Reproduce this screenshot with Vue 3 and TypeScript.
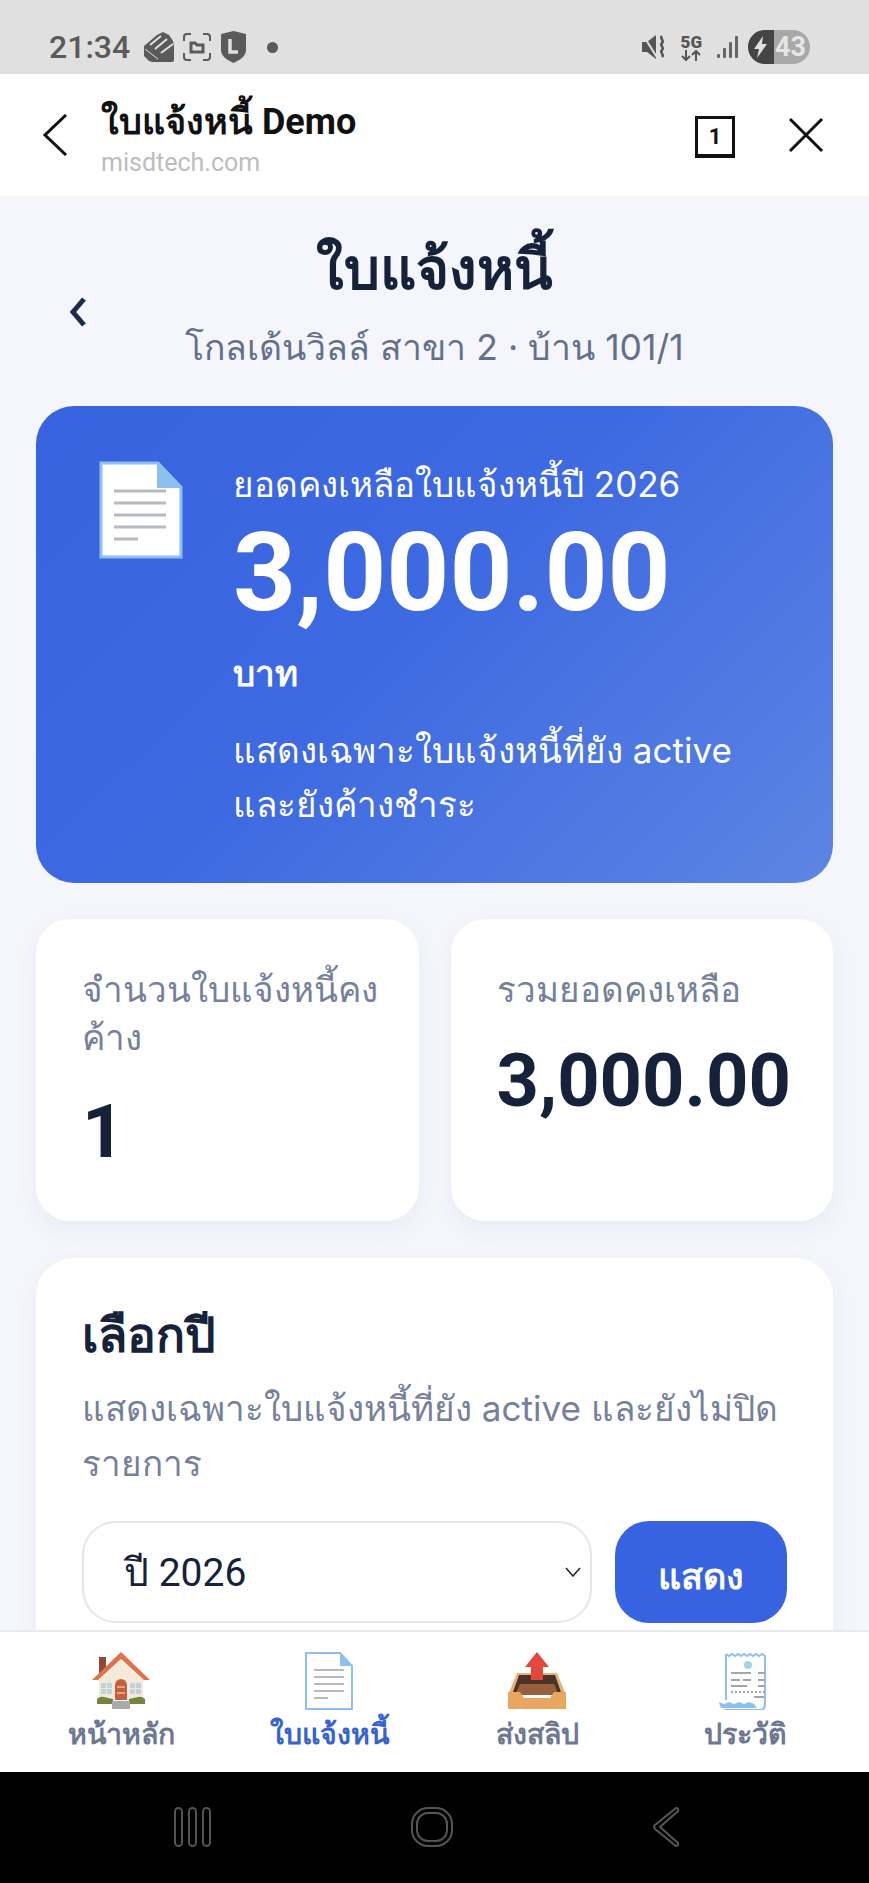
<script setup lang="ts">
interface NavItem {
  label: string
  icon: string
  active?: boolean
}

const navItems: NavItem[] = [
  { label: 'หน้าหลัก', icon: 'home' },
  { label: 'ใบแจ้งหนี้', icon: 'doc', active: true },
  { label: 'ส่งสลิป', icon: 'tray' },
  { label: 'ประวัติ', icon: 'receipt' }
]
</script>

<template>
  <div class="phone">
    <div class="status">
      <div class="status-left">
        <span class="time">21:34</span>
        <svg class="ic-hand" width="30" height="30" viewBox="0 0 30 30">
          <path d="M0 14 13 3l6-3 6 3 4 6 1 5v14a2 2 0 0 1-2 2H8l-3-1-5-5z" fill="#5a5a5a"/>
          <path d="M6 13 17 4M11 17 23 7M17 21 29 12" stroke="#e0e0e0" stroke-width="2" fill="none"/>
          <path d="M1 17 14 27" stroke="#e0e0e0" stroke-width="1" fill="none"/>
        </svg>
        <svg width="28" height="28" viewBox="0 0 28 28" fill="none" stroke="#5a5a5a" stroke-width="2">
          <path d="M1 8V4a3 3 0 0 1 3-3h4M20 1h4a3 3 0 0 1 3 3v4M27 20v4a3 3 0 0 1-3 3h-4M8 27H4a3 3 0 0 1-3-3v-4"/>
          <path d="M8 10h4l2 2h6v7H8z" stroke-width="3"/>
        </svg>
        <svg width="27" height="32" viewBox="0 0 27 32">
          <path d="M1 3 13.500 0 26 3v16c0 6-6 10-12.500 13C7 29 1 25 1 19z" fill="#5a5a5a"/>
          <path d="M10 8v13h8" fill="none" stroke="#e0e0e0" stroke-width="3.500"/>
        </svg>
        <span class="dot"></span>
      </div>
      <div class="status-right">
        <svg width="24" height="26" viewBox="0 0 24 26">
          <path d="M0 8h5l9-7v24l-9-7H0z" fill="#555"/>
          <path d="M1 1l15 24" stroke="#e0e0e0" stroke-width="2"/>
          <path d="M20 2c-3 3 3 4 0 7s3 4 0 7 3 4 0 7" fill="none" stroke="#555" stroke-width="2.500"/>
        </svg>
        <div class="net">
          <b>5G</b>
          <svg width="20" height="11" viewBox="0 0 20 11" fill="none" stroke="#555" stroke-width="2"><path d="M5 0v9M1 6l4 4 4-4M15 11V2M11 5l4-4 4 4"/></svg>
        </div>
        <svg width="22" height="24" viewBox="0 0 22 24" fill="#666">
          <rect x="0" y="19" width="3" height="4" rx="1"/>
          <rect x="6" y="13" width="3" height="10" rx="1"/>
          <rect x="12" y="7" width="3" height="16" rx="1"/>
          <rect x="18" y="1" width="3" height="22" rx="1"/>
        </svg>
        <div class="battery">
          <span class="bolt"><svg width="14" height="22" viewBox="0 0 14 22"><path d="M9 0 0 13h5l-2 9 10-14H8z" fill="#e0e0e0"/></svg></span>
          <span class="level">43</span>
        </div>
      </div>
    </div>

    <div class="topbar">
      <svg class="top-back" width="26" height="42" viewBox="0 0 26 42" fill="none" stroke="#111" stroke-width="3"><path d="M24 1 3 21l21 20"/></svg>
      <div class="top-title">
        <div class="top-name">ใบแจ้งหนี้ Demo</div>
        <div class="top-url">misdtech.com</div>
      </div>
      <div class="tab-count">1</div>
      <svg width="36" height="36" viewBox="0 0 36 36" fill="none" stroke="#111" stroke-width="3"><path d="M2 2l32 32M34 2 2 34"/></svg>
    </div>

    <div class="content">
      <div class="page-head">
        <svg class="page-back" width="18" height="30" viewBox="0 0 18 30" fill="none" stroke="#1e2a4f" stroke-width="5"><path d="M15 2 4 15l11 13"/></svg>
        <h1>ใบแจ้งหนี้</h1>
        <p>โกลเด้นวิลล์ สาขา 2 · บ้าน 101/1</p>
      </div>

      <section class="hero">
        <svg class="hero-icon" width="84" height="98" viewBox="0 0 84 98">
          <path d="M2 2h57l23 24v70H2z" fill="#fff" stroke="#8ec0ee" stroke-width="3"/>
          <path d="M58 1v26h25z" fill="#8ec0ee"/>
          <path d="M15 30h52M15 42h52M15 54h52M15 66h52M15 78h24" stroke="#b5bac0" stroke-width="3"/>
        </svg>
        <div class="hero-body">
          <div class="hero-label">ยอดคงเหลือใบแจ้งหนี้ปี 2026</div>
          <div class="hero-amount">3,000.00</div>
          <div class="hero-unit">บาท</div>
          <div class="hero-note">แสดงเฉพาะใบแจ้งหนี้ที่ยัง active และยังค้างชำระ</div>
        </div>
      </section>

      <div class="stats">
        <div class="stat">
          <div class="stat-label">จำนวนใบแจ้งหนี้คง<wbr>ค้าง</div>
          <div class="stat-value low">1</div>
        </div>
        <div class="stat">
          <div class="stat-label">รวมยอดคงเหลือ</div>
          <div class="stat-value">3,000.00</div>
        </div>
      </div>

      <section class="year-card">
        <h2>เลือกปี</h2>
        <p>แสดงเฉพาะใบแจ้งหนี้ที่ยัง active และยังไม่ปิดรายการ</p>
        <div class="year-row">
          <div class="select">
            <span>ปี 2026</span>
            <svg width="16" height="10" viewBox="0 0 16 10" fill="none" stroke="#222" stroke-width="1.500"><path d="M1 1l7 8 7-8"/></svg>
          </div>
          <button class="show-btn">แสดง</button>
        </div>
      </section>
    </div>

    <nav class="bottom-nav">
      <div v-for="item in navItems" :key="item.label" class="nav-item" :class="{ active: item.active }">
        <svg v-if="item.icon === 'home'" width="58" height="58" viewBox="0 0 58 58">
          <rect x="7" y="5" width="7" height="16" fill="#8e4a32"/>
          <path d="M7 28 29 8l22 20v20H7z" fill="#f3ead9"/>
          <path d="M0 28 29 0l29 28h-6L29 7 6 28z" fill="#e0714a"/>
          <path d="M9 31h11v11H9zM38 31h11v11H38z" fill="#bcd4dc"/>
          <path d="M14.500 31v11M9 36.500h11M43.500 31v11M38 36.500h11" stroke="#f3ead9" stroke-width="1"/>
          <path d="M23 48V33a6 6 0 0 1 12 0v15z" fill="#c4603f"/>
          <path d="M25 35h8M25 41h8" stroke="#e7a27f" stroke-width="2"/>
          <path d="M5 52v-5q3-3 7-2t9 2v5zM53 52v-5q-3-3-7-2t-9 2v5z" fill="#74843f"/>
          <path d="M20 49h18v8H20z" fill="#a9a9a9"/>
        </svg>
        <svg v-else-if="item.icon === 'doc'" width="48" height="58" viewBox="0 0 48 58">
          <path d="M1 1h34l12 13v43H1z" fill="#fff" stroke="#8ec0ee" stroke-width="2"/>
          <path d="M35 1v13h12z" fill="#8ec0ee"/>
          <path d="M9 18h30M9 25h30M9 32h30M9 39h30M9 46h14" stroke="#b5bac0" stroke-width="2"/>
        </svg>
        <svg v-else-if="item.icon === 'tray'" width="58" height="58" viewBox="0 0 58 58">
          <path d="M9 21h40l9 22H0z" fill="#e8b07a"/>
          <path d="M11 23h36l7 20H4z" fill="#4b3327"/>
          <path d="M12 32h34l5 11H7z" fill="#96603f"/>
          <path d="M0 40h12l4 6h26l4-6h12v17H0z" fill="#e8a660"/>
          <path d="M23 28V15h-6L29 0l12 15h-6v13z" fill="#e2493a"/>
        </svg>
        <svg v-else width="52" height="58" viewBox="0 0 52 58" fill="none">
          <path d="M7 2l3 2 3-2 3 2 3-2 3 2 3-2 3 2 3-2 3 2 3-2 3 2 3-2 3 2v48q0 6-5 6H5" stroke="#8ec0ee" stroke-width="2"/>
          <path d="M7 2v46" stroke="#8ec0ee" stroke-width="2"/>
          <path d="M0 50l5 2 5-2 5 2 5-2 5 2 5-2 5 2 3 4H3q-3-1-3-8z" fill="#8ec0ee"/>
          <circle cx="29" cy="13" r="4" fill="#a5d4e0"/>
          <path d="M12 21h20M39 21h7M12 28h9M24 28h8M39 28h7M12 34h16M39 34h7M35 45h10" stroke="#a0a6ac" stroke-width="2"/>
          <path d="M12 40h34" stroke="#a0a6ac" stroke-width="2" stroke-dasharray="2 2"/>
        </svg>
        <span>{{ item.label }}</span>
      </div>
    </nav>

    <div class="android-nav">
      <svg width="38" height="40" viewBox="0 0 38 40" fill="none" stroke="#555" stroke-width="2"><rect x="1" y="1" width="7" height="38" rx="3.500"/><rect x="15" y="1" width="7" height="38" rx="3.500"/><rect x="29" y="1" width="7" height="38" rx="3.500"/></svg>
      <svg width="42" height="40" viewBox="0 0 42 40" fill="none" stroke="#555" stroke-width="2"><rect x="1" y="1" width="40" height="38" rx="16"/><rect x="6" y="6" width="30" height="28" rx="11"/></svg>
      <svg width="28" height="42" viewBox="0 0 28 42" fill="none" stroke="#555" stroke-width="2"><path d="M24 2a2 2 0 0 1 2 3L8 21l18 16a2 2 0 0 1-2 3L3 23a3 3 0 0 1 0-4z"/></svg>
    </div>
  </div>
</template>

<style scoped>
.phone {
  width: 869px;
  height: 1883px;
  display: flex;
  flex-direction: column;
  overflow: hidden;
  background: #f4f6fb;
  font-family: Inter, "Noto Sans", sans-serif;
  color: #16213a;
}

.status {
  height: 74px;
  flex: none;
  background: #e0e0e0;
  display: flex;
  justify-content: space-between;
  align-items: center;
  padding: 20px 59px 0 49px;
  box-sizing: border-box;
}

.status-left {
  display: flex;
  align-items: center;
  gap: 9px;
}

.time {
  font: 500 32px Roboto, sans-serif;
  color: #5a5a5a;
  margin-right: 5px;
}

.dot {
  width: 11px;
  height: 11px;
  border-radius: 50%;
  background: #5a5a5a;
  margin-left: 11px;
}

.status-right {
  display: flex;
  align-items: center;
  gap: 15px;
}

.net {
  display: flex;
  flex-direction: column;
  align-items: center;
  font: 700 17px/16px Roboto, sans-serif;
  color: #555;
}

.battery {
  width: 62px;
  height: 34px;
  border-radius: 17px;
  overflow: hidden;
  display: flex;
  background: #a8a8a8;
  margin-left: -6px;
}

.bolt {
  width: 26px;
  background: #444;
  display: flex;
  align-items: center;
  justify-content: center;
}

.level {
  font: 700 27px/34px Roboto, sans-serif;
  color: #e6e6e6;
  padding-left: 1px;
}

.topbar {
  height: 122px;
  flex: none;
  box-sizing: border-box;
  background: #fff;
  display: flex;
  align-items: center;
  padding: 0 45px 0 42px;
}

.top-back {
  margin-right: 33px;
}

.top-title {
  flex: 1;
  padding-top: 8px;
}

.top-name {
  font: 700 36px/46px Roboto, "Noto Sans", sans-serif;
  color: #111;
}

.top-url {
  font: 400 25px/35px Roboto, sans-serif;
  color: #bdbdbd;
}

.tab-count {
  width: 34px;
  height: 35px;
  border: 3px solid #111;
  border-bottom-width: 4px;
  font: 700 22px/35px Roboto, sans-serif;
  text-align: center;
  color: #111;
  margin-right: 53px;
  margin-top: 3px;
}

.content {
  flex: 1;
  min-height: 0;
  overflow: hidden;
  padding: 0 36px;
}

.page-head {
  position: relative;
  text-align: center;
  padding-top: 31px;
  height: 210px;
  box-sizing: border-box;
}

.page-back {
  position: absolute;
  left: 33px;
  top: 101px;
}

.page-head h1 {
  margin: 0;
  font-size: 56.500px;
  line-height: 84px;
  font-weight: 700;
}

.page-head p {
  margin: 13px 0 0;
  font-size: 35.500px;
  line-height: 48px;
  color: #64708a;
}

.hero {
  height: 477px;
  box-sizing: border-box;
  border-radius: 38px;
  background: linear-gradient(135deg, #3763e0 0%, #3d69e1 45%, #5c85e3 100%);
  color: #fff;
  display: flex;
  gap: 50px;
  padding: 55px 60px 0 63px;
}

.hero-icon {
  flex: none;
}

.hero-label {
  font-size: 35px;
  line-height: 46px;
}

.hero-amount {
  font: 700 110px/132px Roboto, sans-serif;
}

.hero-unit {
  font-size: 35px;
  line-height: 46px;
  font-weight: 700;
  margin-top: 11px;
}

.hero-note {
  font-size: 35px;
  line-height: 54px;
  margin-top: 27px;
}

.stats {
  display: grid;
  grid-template-columns: minmax(0, 1fr) minmax(0, 1fr);
  gap: 32px;
  margin-top: 36px;
}

.stat {
  height: 302px;
  box-sizing: border-box;
  background: #fff;
  border-radius: 34px;
  padding: 46px 34px 0 46px;
  box-shadow: 0 8px 24px rgba(40, 60, 110, 0.06);
}

.stat-label {
  font-size: 35px;
  line-height: 48px;
  color: #76809a;
}

.stat-value {
  font: 700 74px/88px Roboto, sans-serif;
  margin-top: 24px;
}

.stat-value.low {
  margin-top: 27px;
}

.year-card {
  margin-top: 37px;
  height: 460px;
  box-sizing: border-box;
  background: #fff;
  border-radius: 38px;
  padding: 46px 46px 0;
  box-shadow: 0 8px 24px rgba(40, 60, 110, 0.06);
}

.year-card h2 {
  margin: 0;
  font-size: 48px;
  line-height: 62px;
  font-weight: 700;
}

.year-card p {
  margin: 15px 0 0;
  font-size: 35px;
  line-height: 55px;
  color: #76809a;
}

.year-row {
  display: flex;
  gap: 23px;
  margin-top: 30px;
}

.select {
  flex: 1;
  height: 102px;
  box-sizing: border-box;
  border: 2px solid #e4e6ec;
  border-radius: 34px;
  display: flex;
  align-items: center;
  justify-content: space-between;
  padding: 0 9px 0 40px;
  font: 400 39px Roboto, sans-serif;
}

.show-btn {
  width: 172px;
  height: 102px;
  border: 0;
  border-radius: 34px;
  background: #3763e0;
  color: #fff;
  font: 700 36px Inter, "Noto Sans", sans-serif;
  padding-top: 10px;
}

.bottom-nav {
  height: 142px;
  flex: none;
  box-sizing: border-box;
  background: #fff;
  border-top: 2px solid #e8eaee;
  display: grid;
  grid-template-columns: repeat(4, 1fr);
  padding: 20px 20px 0 17px;
}

.nav-item {
  display: flex;
  flex-direction: column;
  align-items: center;
  gap: 6px;
  font-size: 28.500px;
  line-height: 36px;
  font-weight: 700;
  color: #6e7891;
}

.nav-item.active {
  color: #3763d0;
}

.android-nav {
  height: 109px;
  flex: none;
  background: #000;
  display: flex;
  justify-content: space-between;
  align-items: center;
  padding: 0 189px 2px 174px;
}
</style>

<style>
html, body {
  margin: 0;
  background: #000;
}
</style>
